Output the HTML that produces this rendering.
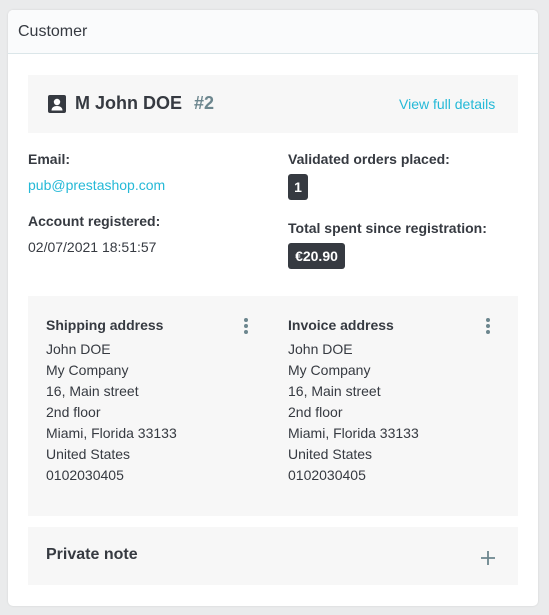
<!DOCTYPE html>
<html><head><style>
body{margin:0;width:549px;height:615px;background:#eaebec;font-family:"Liberation Sans",sans-serif;color:#363a41;position:relative;overflow:hidden}
.a{position:absolute;white-space:nowrap}
.card{position:absolute;left:8px;top:10px;width:530px;height:596px;background:#fff;border-radius:5px;box-shadow:0 0 2px rgba(0,0,0,.1)}
.hd{position:absolute;left:0;top:0;width:530px;height:43px;background:#fafbfc;border-bottom:1px solid #dbe6e9;border-radius:5px 5px 0 0}
.box{position:absolute;background:#f7f7f7}
b{font-weight:bold;display:block;margin-bottom:3px}
.lbl{font-size:14px;font-weight:bold}
.t{font-size:14px}
.badge{position:absolute;background:#363a41;color:#fff;font-weight:bold;font-size:14px;border-radius:3px;text-align:center;line-height:26px}
.dots{position:absolute;width:4px}
.dots i{display:block;width:4px;height:4px;border-radius:2px;background:#6c868e;margin-bottom:2px}
</style></head><body>
<div class="card"><div class="hd"></div></div>
<div class="a" style="left:18px;top:23px;font-size:16px">Customer</div>
<div class="box" style="left:28px;top:75px;width:490px;height:58px"></div>
<svg class="a" style="left:48px;top:95px" width="18" height="18" viewBox="0 0 18 18"><rect x="0" y="0" width="18" height="18" rx="2" fill="#363a41"/><circle cx="9" cy="7" r="3.2" fill="#fff"/><path d="M3.5 15.5c0-3 2.5-4.5 5.5-4.5s5.5 1.5 5.5 4.5z" fill="#fff"/></svg>
<div class="a" style="left:75px;top:93px;font-size:18px;font-weight:bold">M John DOE</div>
<div class="a" style="left:194px;top:93px;font-size:18px;font-weight:bold;color:#6c868e">#2</div>
<div class="a" style="left:399px;top:96px;font-size:14px;color:#25b9d7">View full details</div>
<div class="a lbl" style="left:28px;top:151px">Email:</div>
<div class="a t" style="left:28px;top:177px;color:#25b9d7">pub@prestashop.com</div>
<div class="a lbl" style="left:28px;top:213px">Account registered:</div>
<div class="a t" style="left:28px;top:239px">02/07/2021 18:51:57</div>
<div class="a lbl" style="left:288px;top:151px">Validated orders placed:</div>
<div class="badge" style="left:288px;top:174px;width:20px">1</div>
<div class="a lbl" style="left:288px;top:220px">Total spent since registration:</div>
<div class="badge" style="left:288px;top:243px;width:57px">€20.90</div>
<div class="box" style="left:28px;top:296px;width:490px;height:220px"></div>
<div class="a" style="left:46px;top:315px;font-size:14px;line-height:21px"><b>Shipping address</b>John DOE<br>My Company<br>16, Main street<br>2nd floor<br>Miami, Florida 33133<br>United States<br>0102030405</div>
<div class="a" style="left:288px;top:315px;font-size:14px;line-height:21px"><b>Invoice address</b>John DOE<br>My Company<br>16, Main street<br>2nd floor<br>Miami, Florida 33133<br>United States<br>0102030405</div>
<div class="dots" style="left:244px;top:318px"><i></i><i></i><i></i></div>
<div class="dots" style="left:486px;top:318px"><i></i><i></i><i></i></div>
<div class="box" style="left:28px;top:527px;width:490px;height:58px"></div>
<div class="a" style="left:46px;top:546px;font-size:16px;font-weight:bold">Private note</div>
<svg class="a" style="left:481px;top:551px" width="14" height="14"><path d="M7 0v14M0 7h14" stroke="#6c868e" stroke-width="1.8"/></svg>
</body></html>
